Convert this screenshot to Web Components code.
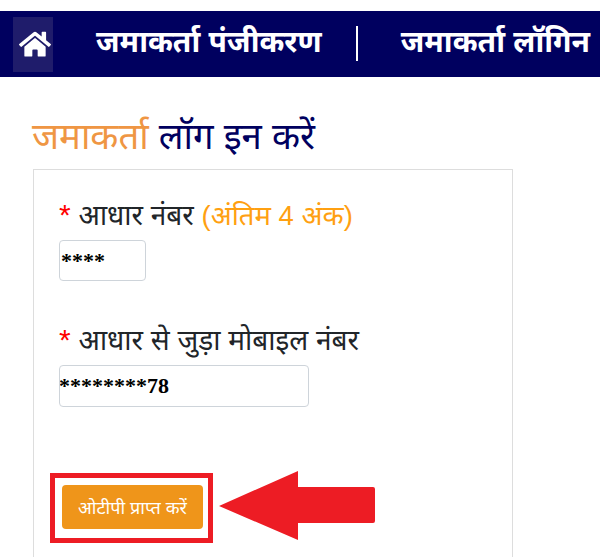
<!DOCTYPE html>
<html lang="hi">
<head>
<meta charset="utf-8">
<title>जमाकर्ता लॉग इन करें</title>
<style>
  html, body { margin: 0; padding: 0; background: #fff; }
  body { width: 600px; height: 557px; overflow: hidden; font-family: "Liberation Sans", "Noto Sans", sans-serif; }
</style>
</head>
<body>
<top-nav>
  <a>जमाकर्ता पंजीकरण</a>
  <a>जमाकर्ता लॉगिन</a>
</top-nav>
<login-page>
  <span slot="lead">जमाकर्ता</span>
  <span slot="rest">लॉग इन करें</span>
  <form-field width="87" height="41" value="****" indent="1">आधार नंबर <span style="color:#ffa011;font-size:27.5px">(अंतिम 4 अंक)</span></form-field>
  <form-field width="250" height="42" value="********78" indent="-1" top="40">आधार से जुड़ा मोबाइल नंबर</form-field>
  <otp-button>ओटीपी प्राप्त करें</otp-button>
</login-page>

<script>
  // Top navigation bar
  class TopNav extends HTMLElement {
    constructor() {
      super();
      this.attachShadow({ mode: 'open' });
      this.shadowRoot.innerHTML = `
        <style>
          :host {
            display: flex;
            align-items: center;
            margin-top: 11px;
            height: 66px;
            padding-left: 13px;
            background: #00005f;
            color: #fff;
            font: bold 30px "Liberation Sans", "Noto Sans", sans-serif;
            white-space: nowrap;
          }
          .home {
            box-sizing: border-box;
            width: 40px;
            height: 55px;
            padding-left: 6px;
            background: #1f1c6b;
            display: flex;
            align-items: center;
          }
          .links { display: flex; align-items: flex-start; margin: -1px 0 0 43px; }
          ::slotted(a) { line-height: 31px; padding-bottom: 4px; }
          ::slotted(a:first-child) {
            padding-right: 34px;
            border-right: 2px solid #fff;
          }
          ::slotted(a:last-child) { padding-left: 43px; }
        </style>
        <div class="home">
          <svg width="32" height="28.4" viewBox="0 0 576 512" fill="#fff">
            <path d="M280.4 148.3 96 300.1V464a16 16 0 0 0 16 16l112.1-.3a16 16 0 0 0 15.9-16V368a16 16 0 0 1 16-16h64a16 16 0 0 1 16 16v95.6a16 16 0 0 0 16 16.1L464 480a16 16 0 0 0 16-16V300L295.7 148.3a12.2 12.2 0 0 0-15.3 0zM571.6 251.5 488 182.6V44.1a12 12 0 0 0-12-12h-56a12 12 0 0 0-12 12v72.6L318.5 43a48 48 0 0 0-61 0L4.3 251.5a12 12 0 0 0-1.6 16.9l25.5 31A12 12 0 0 0 45.2 301l235.2-193.7a12.2 12.2 0 0 1 15.3 0L530.9 301a12 12 0 0 0 16.9-1.6l25.5-31a12 12 0 0 0-1.7-16.9z"/>
          </svg>
        </div>
        <div class="links"><slot></slot></div>
      `;
    }
  }

  // Heading plus the bordered card, with the red annotations on top
  class LoginPage extends HTMLElement {
    constructor() {
      super();
      this.attachShadow({ mode: 'open' });
      this.shadowRoot.innerHTML = `
        <style>
          :host {
            display: block;
            position: relative;
            padding: 36px 0 0 32px;
          }
          h1 {
            margin: 0 0 8px;
            font-size: 36.5px;
            font-weight: 400;
            line-height: 48px;
            color: #00005f;
          }
          ::slotted([slot=lead]) { color: #ef9643; }
          .card {
            box-sizing: border-box;
            width: 480px;
            height: 400px;
            margin-left: 1px;
            padding: 26px 25px;
            border: 1px solid #ddd;
            border-bottom: 0;
          }
        </style>
        <h1><slot name="lead"></slot> <slot name="rest"></slot></h1>
        <div class="card"><slot></slot></div>
      `;
    }
  }

  class FormField extends HTMLElement {
    constructor() {
      super();
      this.attachShadow({ mode: 'open' });
      const w = this.getAttribute('width');
      const h = this.getAttribute('height');
      const top = this.getAttribute('top') || 0;
      const indent = this.getAttribute('indent') || 0;
      const value = this.getAttribute('value');
      this.shadowRoot.innerHTML = `
        <style>
          :host {
            display: block;
            margin-top: ${top}px;
            font: 28px "Liberation Sans", "Noto Sans", sans-serif;
            color: #212529;
          }
          label { display: block; height: 44px; line-height: 39px; white-space: nowrap; }
          i { font-style: normal; color: #f00; font-size: 30px; line-height: 1; }
          input {
            display: block;
            box-sizing: border-box;
            width: ${w}px;
            height: ${h}px;
            padding: 1px 2px 1px 0;
            text-indent: ${indent}px;
            border: 1px solid #ced4da;
            border-radius: 4px;
            font: bold 22px "Liberation Serif", serif;
            color: #000;
            background: #fff;
            outline: 0;
          }
        </style>
        <label><i>*</i> <slot></slot></label>
        <input type="text" value="${value}">
      `;
    }
  }

  class OtpButton extends HTMLElement {
    constructor() {
      super();
      this.attachShadow({ mode: 'open' });
      this.shadowRoot.innerHTML = `
        <style>
          :host {
            display: block;
            position: relative;
            margin-top: 78px;
            margin-left: 3px;
            width: 141px;
          }
          button {
            display: block;
            box-sizing: border-box;
            width: 141px;
            height: 44px;
            padding: 0;
            border: 0;
            border-radius: 4px;
            background: #ef951a;
            color: #fff;
            font: 18px "Liberation Sans", "Noto Sans", sans-serif;
            white-space: nowrap;
          }
          .box {
            position: absolute;
            left: -12px;
            top: -12px;
            width: 153px;
            height: 60px;
            border: 5px solid #ed1c24;
          }
          svg { position: absolute; left: 157px; top: -14px; }
        </style>
        <button type="button"><slot></slot></button>
        <div class="box"></div>
        <svg width="157" height="70" viewBox="0 0 157 70">
          <path d="M0 35 L79 0 V16 H154 Q156 16 156 18 V50 Q156 52 154 52 H79 V69 Z" fill="#ed1c24"/>
        </svg>
      `;
    }
  }

  customElements.define('top-nav', TopNav);
  customElements.define('login-page', LoginPage);
  customElements.define('form-field', FormField);
  customElements.define('otp-button', OtpButton);
</script>
</body>
</html>
